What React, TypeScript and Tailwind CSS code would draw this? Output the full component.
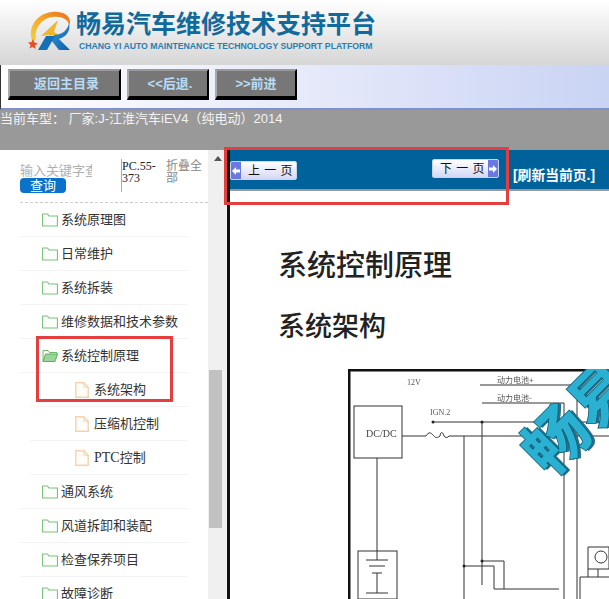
import { ReactNode } from 'react';

const CJK = "font-['Liberation_Sans','Noto_Sans_CJK_SC',sans-serif]";

function Logo() {
  return (
    <svg width="48" height="46" viewBox="0 0 48 46" className="shrink-0">
      <defs>
        <linearGradient id="swoosh" x1="0" y1="1" x2="1" y2="0">
          <stop offset="0" stopColor="#f6d040" />
          <stop offset="0.5" stopColor="#f4a828" />
          <stop offset="1" stopColor="#e8701c" />
        </linearGradient>
        <linearGradient id="blue" x1="0" y1="0" x2="1" y2="1">
          <stop offset="0" stopColor="#2f9ae0" />
          <stop offset="1" stopColor="#0f5fa8" />
        </linearGradient>
      </defs>
      <path d="M9 33C3 22 10 5 28 3c10-1 18 3 18 10 0 1 0 2-1 3-1-6-8-9-16-8C17 9 10 20 12 30z" fill="url(#swoosh)" />
      <path d="M34 11L17 27l9-1-3 7 5-7h7l-5-3z" fill="#f2b62e" />
      <path d="M45 14c2 8-3 14-10 16l11 11H35l-8-10 3-5c8 0 14-5 15-12z" fill="url(#blue)" />
      <path d="M14 41l8-14h9l-8 14z" fill="#1670b8" />
      <path d="M9 30l1.500 3.500 3.500 1-3 2 .5 3.500-3-2-3 1.500 1-3.500-2.500-2.500 3.500-.5z" fill="#e8502a" />
    </svg>
  );
}

function NavButton({ size, children }: { size: string; children: ReactNode }) {
  return (
    <div className={`${size} h-[31px] flex items-center justify-center bg-[#777] border-2 border-t-[#999] border-l-[#aaa] border-r-black border-b-[4px] border-b-black text-[13px] font-bold text-[#b8dcf5]`}>
      {children}
    </div>
  );
}

function FolderIcon({ open }: { open?: boolean }) {
  return (
    <svg width="16" height="14" viewBox="0 0 16 14" fill="none" className="shrink-0">
      {open ? (
        <>
          <path d="M1 12.500V1.500h5l1.500 2H15V5" stroke="#6cb86c" />
          <path d="M1 12.500L3.500 5H15.500L13 12.500z" fill="#9ad69a" stroke="#5fae5f" />
        </>
      ) : (
        <path d="M.5 13V1h5l1.500 2H15.500V13z" fill="#fafdfa" stroke="#7cc27c" strokeWidth="1.200" />
      )}
    </svg>
  );
}

function FileIcon() {
  return (
    <svg width="14" height="16" viewBox="0 0 14 16" fill="none" className="shrink-0">
      <path d="M.8.8h8l4.400 4.400v10H.8z" fill="#fffdf9" stroke="#f5d3ac" strokeWidth="1.400" />
      <path d="M8.800.8v4.400h4.400" stroke="#f5d3ac" />
    </svg>
  );
}

const TREE_TOP = ['系统原理图', '日常维护', '系统拆装', '维修数据和技术参数'];
const TREE_BOTTOM = ['通风系统', '风道拆卸和装配', '检查保养项目', '故障诊断'];

function FolderRow({ label, open }: { label: string; open?: boolean }) {
  return (
    <div className="ml-[20px] w-[168px] h-[34px] shrink-0 flex items-center gap-[3px] pl-[22px] border-b border-[#f3f3f3] text-[13px] text-[#333]">
      <FolderIcon open={open} />
      <span className="whitespace-nowrap">{label}</span>
    </div>
  );
}

function FileRow({ children }: { children: ReactNode }) {
  return (
    <div className="ml-[30px] w-[158px] h-[34px] shrink-0 flex items-center gap-[5px] pl-[45px] border-b border-[#f3f3f3] text-[13px] text-[#333]">
      <FileIcon />
      <span className="whitespace-nowrap">{children}</span>
    </div>
  );
}

function Sidebar() {
  return (
    <div className="w-[208px] h-full bg-white overflow-hidden flex flex-col shrink-0">
      <div className="h-[53px] shrink-0 flex border-b border-dashed border-[#ccc] ml-[20px]">
        <div className="w-[101px] pt-[13px]">
          <div className="w-[72px] h-[15px] overflow-hidden whitespace-nowrap text-[13px] leading-[15px] text-[#b0b0b0]">输入关键字查</div>
          <div className="w-[46px] h-[15px] rounded-[4px] bg-[#0b72c9] text-white text-[13px] leading-[15px] text-center">查询</div>
        </div>
        <div className="w-[45px] h-[33px] mt-[9px] pt-[1px] border-l border-[#aaa] font-['Liberation_Serif'] text-[12px] leading-[12px] text-[#222]">PC.55-373</div>
        <div className="w-[38px] mt-[10px] text-[12px] leading-[12px] text-[#888]">折叠全部</div>
      </div>
      {TREE_TOP.map((label) => (
        <FolderRow key={label} label={label} />
      ))}
      <FolderRow label="系统控制原理" open />
      <FileRow>系统架构</FileRow>
      <FileRow>压缩机控制</FileRow>
      <FileRow>
        <span className="font-['Liberation_Serif'] text-[14px]">PTC</span>控制
      </FileRow>
      {TREE_BOTTOM.map((label) => (
        <FolderRow key={label} label={label} />
      ))}
    </div>
  );
}

function Scrollbar() {
  return (
    <div className="w-[19px] h-full bg-[#f0f0f0] shrink-0 flex flex-col items-center">
      <div className="mt-[6px] w-0 h-0 border-x-[4px] border-x-transparent border-b-[5px] border-b-[#555]" />
      <div className="mt-[209px] ml-[-4px] w-[13px] h-[158px] bg-[#c1c1c1]" />
    </div>
  );
}

function PageButton({ dir, label }: { dir: 'prev' | 'next'; label: string }) {
  const arrow = (
    <div className="w-[10px] h-full bg-[#6a78e0] flex items-center justify-center">
      <svg width="8" height="8" viewBox="0 0 8 8" fill="white">
        {dir === 'prev' ? <path d="M0 4l4-4v2.500h4v3H4V8z" /> : <path d="M8 4L4 0v2.500H0v3h4V8z" />}
      </svg>
    </div>
  );
  return (
    <div className="w-[67px] h-[19px] flex rounded-[2px] overflow-hidden border border-[#c8d4f0] bg-gradient-to-b from-white to-[#d5d8f5] text-[12px] text-[#111]">
      {dir === 'prev' && arrow}
      <div className="flex-1 pl-[4px] text-center leading-[18px] tracking-[0.5px] whitespace-nowrap">{label}</div>
      {dir === 'next' && arrow}
    </div>
  );
}

function Diagram() {
  return (
    <svg width="261" height="230" viewBox="0 0 261 230" fill="none" className="ml-[118px] mt-[22px] blur-[0.5px]">
      <g stroke="#333" strokeWidth="1">
        <rect x="6" y="37" width="48" height="52" />
        <path d="M54 67h24M101 67h160M29 89v93" />
        <path d="M85 53h176M116 67v163M134 53v163" />
        <path d="M132 16h97v214M134 34h82v196" />
        <rect x="10" y="182" width="39" height="48" />
        <path d="M18 191h22M21 197h16M24 204h10M29 204v20M18 224h22M29 182v9" />
        <path d="M116 197h30v23h65M134 192h22v28" />
        <path d="M240 178h21v22h-21zM232 230v-22h29M240 200v8M250 200v8" />
        <circle cx="253" cy="188" r="6" />
      </g>
      <path d="M78 67c3-5 5-3 7-1s3 4 7 1c1-6 3-3 4 0 1 2 4 2 5 0" stroke="#333" />
      <circle cx="85" cy="53" r="1.500" fill="#222" />
      <circle cx="134" cy="53" r="1.500" fill="#222" />
      <circle cx="116" cy="197" r="1.500" fill="#222" />
      <circle cx="134" cy="192" r="1.500" fill="#222" />
      <rect x="0" y="0" width="261" height="2.500" fill="#111" />
      <rect x="0" y="0" width="2.500" height="230" fill="#111" />
      <text x="59" y="16" fontSize="8" fill="#555" fontFamily="Liberation Serif">12V</text>
      <text x="82" y="46" fontSize="8" fill="#555" fontFamily="Liberation Serif">IGN.2</text>
      <text x="18" y="68" fontSize="10" fill="#444" fontFamily="Liberation Serif">DC/DC</text>
      <text x="149" y="14" fontSize="8" fill="#555" fontFamily="Noto Sans CJK SC">动力电池+</text>
      <text x="149" y="32" fontSize="8" fill="#555" fontFamily="Noto Sans CJK SC">动力电池-</text>
      <g transform="rotate(-45 202 110)" fontSize="64" fontWeight="900" fontFamily="Noto Sans CJK SC">
        <text x="204" y="112" fill="#2b6f86">畅易</text>
        <text x="202" y="110" fill="#2ab0d0" stroke="#0d5a78" strokeWidth="0.800">畅易</text>
      </g>
    </svg>
  );
}

function Content() {
  return (
    <div className="flex-1 min-w-0 h-full flex flex-col bg-white overflow-hidden border-l-[3px] border-[#111]">
      <div className="h-[41px] shrink-0 bg-[#00629b] flex border-b-2 border-[#999]">
        <div className="mt-[11px]"><PageButton dir="prev" label="上 一 页" /></div>
        <div className="mt-[9px] ml-[135px]"><PageButton dir="next" label="下 一 页" /></div>
        <div className="mt-[17px] ml-[14px] text-[13.800px] leading-[18px] font-bold text-white whitespace-nowrap">[刷新当前页.]</div>
      </div>
      <div className="pl-[48px] pt-[55px] text-[#222]">
        <div className="text-[29px] leading-[40px] font-medium">系统控制原理</div>
        <div className="mt-[21px] text-[27px] leading-[40px] font-medium">系统架构</div>
      </div>
      <Diagram />
    </div>
  );
}

export default function App() {
  return (
    <div className={`relative w-[609px] h-[599px] overflow-hidden flex flex-col bg-white ${CJK}`}>
      {/* Header */}
      <div className="h-[65px] shrink-0 flex items-start pl-[24px] pt-[9px] bg-gradient-to-b from-white to-[#d6d6d6]">
        <Logo />
        <div className="ml-[4px] mt-[1px]">
          <div className="text-[25px] leading-[29px] font-bold text-[#116a9c] whitespace-nowrap">畅易汽车维修技术支持平台</div>
          <div className="ml-[3px] mt-[1px] text-[8.700px] leading-[12px] font-bold text-[#2a7fb0] whitespace-nowrap">CHANG YI AUTO MAINTENANCE TECHNOLOGY SUPPORT PLATFORM</div>
        </div>
      </div>

      {/* Nav */}
      <div className="h-[45px] shrink-0 flex gap-[6px] pl-[7px] pt-[4px] bg-gradient-to-r from-white via-[#e6eafa] to-[#c9d3f3] border-b-[2px] border-[#7f8fcf] border-l border-l-[#333]">
        <NavButton size="w-[113px] pl-[4px]">返回主目录</NavButton>
        <NavButton size="w-[82px] pl-[4px]">{'<<后退.'}</NavButton>
        <NavButton size="w-[82px]">{'>>前进'}</NavButton>
      </div>

      {/* Model band */}
      <div className="h-[40px] shrink-0 bg-[#999] text-[13px] leading-[17px] text-[#f2f2f2] whitespace-nowrap">
        当前车型： 厂家:J-江淮汽车iEV4（纯电动）2014
      </div>

      {/* Main */}
      <div className="flex-1 min-h-0 flex">
        <Sidebar />
        <Scrollbar />
        <Content />
      </div>

      {/* Red annotations drawn over the screenshot */}
      <div className="absolute left-[224px] top-[147px] w-[285px] h-[58px] border-[3px] border-[#e53e3e]" />
      <div className="absolute left-[36px] top-[336px] w-[137px] h-[66px] border-[3px] border-[#e53e3e]" />
    </div>
  );
}
